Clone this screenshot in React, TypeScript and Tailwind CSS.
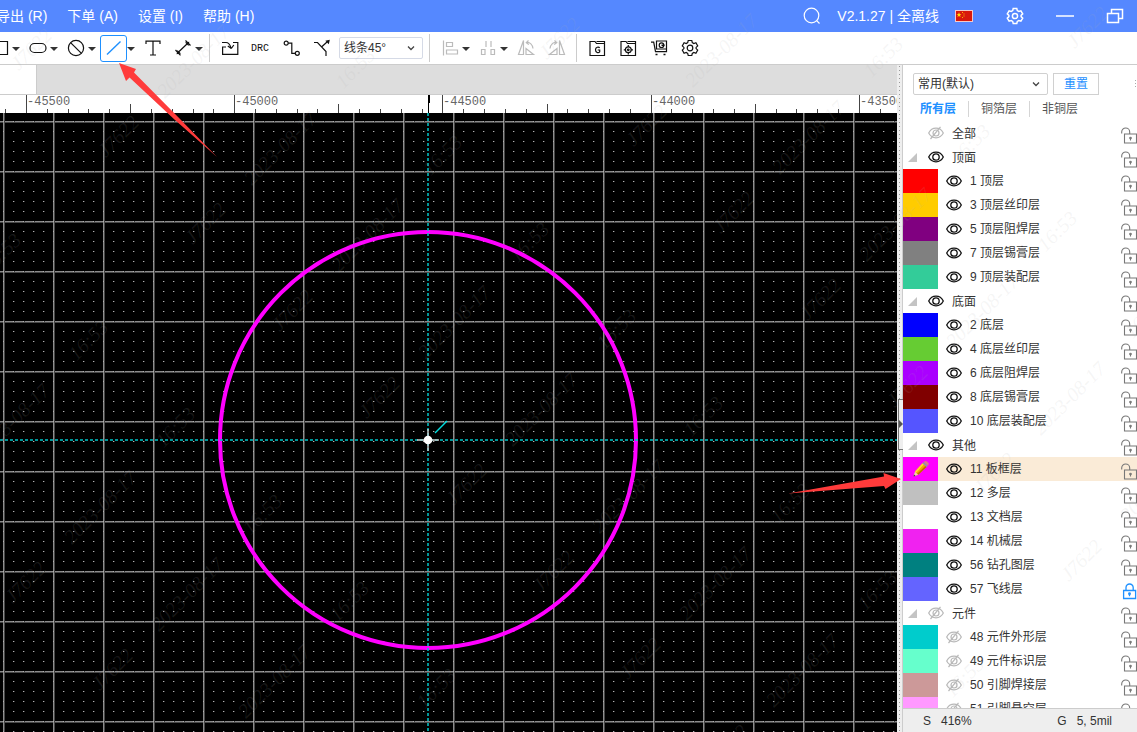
import { ReactNode, useState } from "react";
import clsx from "clsx";

interface Layer {
  id: number;
  name: string;
  color: string;
  locked?: boolean;
}

interface LayerGroup {
  name: string;
  visible: boolean;
  layers: Layer[];
}

const GROUPS: LayerGroup[] = [
  {
    name: "顶面",
    visible: true,
    layers: [
      { id: 1, name: "顶层", color: "bg-[#ff0000]" },
      { id: 3, name: "顶层丝印层", color: "bg-[#ffcc00]" },
      { id: 5, name: "顶层阻焊层", color: "bg-[#800080]" },
      { id: 7, name: "顶层锡膏层", color: "bg-[#808080]" },
      { id: 9, name: "顶层装配层", color: "bg-[#33cc99]" },
    ],
  },
  {
    name: "底面",
    visible: true,
    layers: [
      { id: 2, name: "底层", color: "bg-[#0000ff]" },
      { id: 4, name: "底层丝印层", color: "bg-[#66cc33]" },
      { id: 6, name: "底层阻焊层", color: "bg-[#aa00ff]" },
      { id: 8, name: "底层锡膏层", color: "bg-[#800000]" },
      { id: 10, name: "底层装配层", color: "bg-[#5555ff]" },
    ],
  },
  {
    name: "其他",
    visible: true,
    layers: [
      { id: 11, name: "板框层", color: "bg-[#ff00ff]" },
      { id: 12, name: "多层", color: "bg-[#c0c0c0]" },
      { id: 13, name: "文档层", color: "bg-white" },
      { id: 14, name: "机械层", color: "bg-[#f022f0]" },
      { id: 56, name: "钻孔图层", color: "bg-[#008080]" },
      { id: 57, name: "飞线层", color: "bg-[#6464ff]", locked: true },
    ],
  },
  {
    name: "元件",
    visible: false,
    layers: [
      { id: 48, name: "元件外形层", color: "bg-[#00cccc]" },
      { id: 49, name: "元件标识层", color: "bg-[#66ffcc]" },
      { id: 50, name: "引脚焊接层", color: "bg-[#cc9999]" },
      { id: 51, name: "引脚悬空层", color: "bg-[#ff99ff]" },
    ],
  },
];

const MENUS = ["导出 (R)", "下单 (A)", "设置 (I)", "帮助 (H)"];
const TABS = ["所有层", "铜箔层", "非铜层"];

const GEAR =
  "M8.2 2.5h3.6l.5 2.1 1.5.9 2.1-.7 1.8 3.1-1.6 1.5v1.2l1.6 1.5-1.8 3.1-2.1-.7-1.5.9-.5 2.1H8.2l-.5-2.1-1.5-.9-2.1.7-1.8-3.1 1.6-1.5V9.4L2.3 7.9l1.8-3.1 2.1.7 1.5-.9z";

/* ---------- ICONS ---------- */

const Icon = ({ children, className }: { children: ReactNode; className?: string }) => (
  <svg
    viewBox="0 0 20 20"
    className={clsx("h-5 w-5 shrink-0", className)}
    fill="none"
    stroke="currentColor"
    strokeWidth="1.2"
    aria-hidden="true"
  >
    {children}
  </svg>
);

const Chevron = () => (
  <svg
    viewBox="0 0 8 8"
    className="pointer-events-none absolute top-1/2 right-2 h-2 w-2 -translate-y-1/2"
    fill="none"
    stroke="#444"
    strokeWidth="1.3"
    aria-hidden="true"
  >
    <path d="M1 2.5 4 5.5 7 2.5" />
  </svg>
);

const EyeIcon = ({ on }: { on: boolean }) =>
  on ? (
    <svg viewBox="0 0 16 14" className="h-3.5 w-4" fill="none" stroke="#111" strokeWidth="1.3">
      <path d="M.7 7C2.3 3.8 5 2.2 8 2.2S13.7 3.8 15.3 7C13.7 10.2 11 11.8 8 11.8S2.3 10.2.7 7z" />
      <circle cx="8" cy="7" r="3.2" />
    </svg>
  ) : (
    <svg viewBox="0 0 16 14" className="h-3.5 w-4" fill="none" stroke="#b8b8b8" strokeWidth="1.2">
      <path d="M.7 7C2.3 3.8 5 2.2 8 2.2S13.7 3.8 15.3 7C13.7 10.2 11 11.8 8 11.8S2.3 10.2.7 7z" />
      <circle cx="8" cy="7" r="3" />
      <path d="M2.5 13 12.5.8" />
    </svg>
  );

const LockIcon = ({ locked }: { locked?: boolean }) =>
  locked ? (
    <svg viewBox="0 0 16 17" className="h-[17px] w-4" fill="none" stroke="#1e90ff" strokeWidth="1.3">
      <path d="M2.6 7.5h12v8h-12zM5 7.5V4.6a3.6 3.6 0 0 1 7.2 0v2.9M8.5 10v3.2" />
      <circle cx="8.5" cy="10.8" r=".8" />
    </svg>
  ) : (
    <svg viewBox="0 0 16 17" className="h-[17px] w-4" fill="none" stroke="#777" strokeWidth="1.1">
      <path d="M3.500 7h12v9h-12zM.7 6.500V5a4 4 0 0 1 8 0v2M9.500 10.500v3" />
      <circle cx="9.500" cy="11" r=".8" />
    </svg>
  );

const PencilIcon = () => (
  <svg viewBox="0 0 18 18" className="h-[18px] w-[18px]" aria-hidden="true">
    <path d="M1.5 16.5 3 11.5 6.3 14.8z" fill="#f4d3a1" />
    <path d="M1.5 16.5 2.1 14.5 3.5 15.9z" fill="#333" />
    <path d="M3 11.5 10.5 3.3 14.5 7 6.3 14.8z" fill="#f5a800" />
    <path d="M3 11.5 10.5 3.3 11.8 4.5 4.2 12.7z" fill="#ffd633" />
    <path d="M6.3 14.8 5.2 13.7 13.3 5.9 14.5 7z" fill="#b86a00" />
    <path d="M10.5 3.3 11.9 1.9 15.9 5.6 14.5 7z" fill="#8c9aa5" />
    <path d="M11.9 1.9Q13.2.6 14.8 1.4L16.6 3.1Q17.2 4.4 15.9 5.6z" fill="#d98282" />
  </svg>
);

/* ---------- TOOLBAR ---------- */

const ToolButton = ({
  label,
  size = "h-5 w-5",
  className,
  children,
}: {
  label: string;
  size?: string;
  className?: string;
  children: ReactNode;
}) => (
  <button
    type="button"
    title={label}
    aria-label={label}
    className={clsx("flex shrink-0 items-center justify-center", size, className)}
  >
    {children}
  </button>
);

const Caret = ({ label, className = "w-3" }: { label: string; className?: string }) => (
  <button
    type="button"
    aria-label={label}
    className={clsx("flex h-5 shrink-0 items-center justify-center pt-0.5", className)}
  >
    <svg viewBox="0 0 8 4" className="h-1 w-2 shrink-0" fill="#333" aria-hidden="true">
      <path d="M0 0h8L4 4z" />
    </svg>
  </button>
);

const Divider = ({ className }: { className?: string }) => (
  <span className={clsx("h-7 w-px shrink-0 bg-[#ccc]", className)} />
);

const Toolbar = () => (
  <div className="flex h-[33px] shrink-0 items-center border-b border-[#ccc] bg-white text-[#111]">
    <ToolButton label="矩形" size="h-5 w-2.5">
      <svg viewBox="0 0 10 20" className="h-5 w-2.5 shrink-0" fill="none" stroke="currentColor" strokeWidth="1.2">
        <path d="M0 3.5h7.5v13H0" />
      </svg>
    </ToolButton>
    <Caret label="更多矩形" />
    <ToolButton label="焊盘" className="ml-1.5">
      <Icon>
        <rect x="2" y="5.5" width="16" height="9" rx="4.5" />
      </Icon>
    </ToolButton>
    <Caret label="更多焊盘" />
    <ToolButton label="禁止区域" className="ml-1.5">
      <Icon>
        <circle cx="10" cy="10" r="7.6" />
        <path d="M4.8 4.8 15.2 15.2" />
      </Icon>
    </ToolButton>
    <Caret label="更多禁止区域" />
    <ToolButton
      label="线条"
      size="h-[27px] w-[27px]"
      className="ml-0.5 rounded-[3px] border border-[#1e90ff] text-[#1e90ff]"
    >
      <Icon>
        <path d="M3 16.5 16.5 3.5" strokeWidth="1.4" />
      </Icon>
    </ToolButton>
    <Caret label="更多线条" className="w-2" />
    <ToolButton label="文本" className="ml-2">
      <Icon>
        <path d="M3 6V3.2h14V6M10 3.2V17M7 17h6" />
      </Icon>
    </ToolButton>
    <ToolButton label="尺寸" className="ml-2.5">
      <Icon>
        <path d="M4.5 15 15 5M2.5 12l5 5.3M12.5 2.5l5 5" />
        <path d="M3.5 16.2 4.5 12 8 15.5zM16.3 3.8 15.5 8 12 4.5z" fill="currentColor" stroke="none" />
      </Icon>
    </ToolButton>
    <Caret label="更多尺寸" />
    <Divider className="ml-1" />
    <ToolButton label="导入变更" className="ml-2.5">
      <Icon>
        <path d="M6 9H2.6v7.4h15.2V4.5H13M2 4.5h4c3 0 4 2 5 5.5M11.3 10.5 7.8 8M11.3 10.5 13.8 7" />
      </Icon>
    </ToolButton>
    <ToolButton label="设计规则检查" className="ml-2.5 font-['Liberation_Mono',monospace] text-[10px]">
      DRC
    </ToolButton>
    <ToolButton label="布线" className="ml-3">
      <Icon>
        <circle cx="4.2" cy="5.2" r="2" />
        <circle cx="15.3" cy="15.3" r="2" />
        <path d="M6.2 5.2h3.6v10.1h3.5" />
      </Icon>
    </ToolButton>
    <ToolButton label="拆分走线" className="ml-2.5">
      <Icon>
        <path d="M2 4.5h3.5L14 13.5V18M9.5 9 15 4" />
        <path d="M17.8 1.8 16.8 6.3 13.3 2.8z" fill="currentColor" stroke="none" />
      </Icon>
    </ToolButton>
    <div className="relative ml-[7px] w-[84px] shrink-0">
      <select
        aria-label="线条角度"
        defaultValue="45"
        className="block h-[22px] w-full appearance-none rounded-[2px] border border-[#d5dae6] bg-white pl-1 text-xs text-[#333]"
      >
        <option value="45">线条45°</option>
        <option value="90">线条90°</option>
      </select>
      <Chevron />
    </div>
    <Divider className="ml-1.5" />
    <ToolButton label="左对齐" className="ml-3 text-[#bbb]">
      <Icon>
        <path d="M1.5 2.5v15M4.5 4.5h6v4h-6zM4.5 12h11v4h-11z" />
      </Icon>
    </ToolButton>
    <Caret label="更多对齐" className="w-2" />
    <ToolButton label="水平分布" className="ml-2 text-[#bbb]">
      <Icon>
        <path d="M8 3v6M13 3v6M3.5 11.5H7v5H3.5zM13 11.5h3.5v5H13z" />
      </Icon>
    </ToolButton>
    <Caret label="更多分布" className="ml-0.5 w-2" />
    <ToolButton label="左旋转" className="ml-2 text-[#bbb]">
      <Icon>
        <path d="M7.5 2.5v14h-5zM10 10.5v6h7.5zM10.5 4.5c3.5-.5 6 2 6.5 6M12.5 2.5 10.3 4.6l2.5 2" />
      </Icon>
    </ToolButton>
    <ToolButton label="右旋转" className="ml-[11px] text-[#bbb]">
      <Icon>
        <path d="M12.5 2.5v14h5zM10 10.5v6H2.5zM9.5 4.5C6 4 3.5 6.5 3 10.5M7.5 2.5 9.7 4.6l-2.5 2" />
      </Icon>
    </ToolButton>
    <Divider className="ml-[9px]" />
    <ToolButton label="Gerber 输出" className="ml-2.5">
      <Icon>
        <path d="M3 3.5h5l1.5 2H17.5v12H3zM9.5 3.5h8v2M12.7 9.8c-1-1.2-4.2-1-4.2 2s3 3.4 4.2 2v-1.8h-2" />
      </Icon>
    </ToolButton>
    <ToolButton label="坐标文件" className="ml-[11px]">
      <Icon>
        <path d="M3 3.5h5l1.5 2H17.5v12H3zM9.5 3.5h8v2M10.3 7v2M10.3 14.5v2M5.8 11.8h2M13 11.8h2" />
        <circle cx="10.3" cy="11.8" r="2.9" />
        <circle cx="10.3" cy="11.8" r=".8" />
      </Icon>
    </ToolButton>
    <ToolButton label="下单" className="ml-[11px]">
      <Icon>
        <path d="M2 4.2h2.7l1.8 9.5h11V3H7.5V11H17.5" />
        <circle cx="12.5" cy="7.2" r="2.3" />
        <path d="M12.5 7.2h3M6.5 16.5h2M14.5 16.5h2" strokeWidth="1.6" />
      </Icon>
    </ToolButton>
    <ToolButton label="设置" className="ml-[11px]">
      <Icon>
        <path d={GEAR} />
        <circle cx="10" cy="10" r="2.8" />
      </Icon>
    </ToolButton>
  </div>
);

/* ---------- HEADER ---------- */

const Header = () => (
  <header className="flex h-8 shrink-0 items-center justify-between bg-[#5588ff] pr-3 text-sm text-white">
    <nav className="-ml-1 flex gap-5">
      {MENUS.map((m) => (
        <button key={m} type="button" className="whitespace-nowrap">
          {m}
        </button>
      ))}
    </nav>
    <div className="flex items-center">
      <button type="button" aria-label="搜索">
        <Icon>
          <circle cx="10.5" cy="9.5" r="7.3" />
          <path d="M15.7 14.7 18.5 17.5" />
        </Icon>
      </button>
      <span className="ml-4 whitespace-nowrap">V2.1.27 | 全离线</span>
      <button type="button" aria-label="语言" className="ml-4">
        <svg viewBox="0 0 18 12" className="h-3 w-[18px]" aria-hidden="true">
          <rect width="18" height="12" fill="#f3c9c9" />
          <rect x="1" y="1" width="16" height="10" fill="#d8180c" />
          <path d="M4 2.2 4.7 4H6.5L5 5.1 5.6 7 4 5.9 2.4 7 3 5.1 1.5 4H3.3z" fill="#ffde00" />
          <path d="M7 2h1v1H7zM8.5 3.5h1v1h-1zM8.5 5.5h1v1h-1zM7 7h1v1H7z" fill="#ffb300" />
        </svg>
      </button>
      <button type="button" aria-label="系统设置" className="ml-8">
        <Icon>
          <path d={GEAR} strokeWidth="1.5" />
          <circle cx="10" cy="10" r="2.6" strokeWidth="1.5" />
        </Icon>
      </button>
      <button type="button" aria-label="最小化" className="ml-[30px]">
        <Icon>
          <path d="M1 10h18" strokeWidth="1.5" />
        </Icon>
      </button>
      <button type="button" aria-label="还原" className="ml-[30px]">
        <Icon>
          <path d="M2.5 7.5h11v9h-11zM6.5 7V3.5h11v9H14" strokeWidth="1.5" />
        </Icon>
      </button>
    </div>
  </header>
);

/* ---------- CANVAS ---------- */

const RULER_STEP = 208.2;
const RULER_START = 26.5;

const Ruler = () => {
  const ticks = Array.from({ length: 110 }, (_, i) => i - 1);
  return (
    <svg className="block h-[18px] w-full shrink-0 bg-white" aria-hidden="true">
      {ticks.map((i) => {
        const x = Math.floor(RULER_START + (i * RULER_STEP) / 10);
        const h = i % 10 === 0 ? 18 : i % 5 === 0 ? 9 : 4;
        return <rect key={i} x={x} y={18 - h} width="1" height={h} fill="#444" />;
      })}
      {ticks
        .filter((i) => i % 10 === 0)
        .map((i) => (
          <text
            key={i}
            x={Math.floor(RULER_START + (i * RULER_STEP) / 10) + 1}
            y="10"
            fill="#666"
            className="font-['Liberation_Mono',monospace] text-xs"
          >
            {-45500 + i * 50}
          </text>
        ))}
      <path d="M428.5 0v18" stroke="#000" />
      <path d="M429 0v8" stroke="#000" strokeWidth="2" />
    </svg>
  );
};

const Canvas = () => (
  <svg className="block min-h-0 w-full flex-1 bg-black" role="img" aria-label="PCB 画布">
    <defs>
      <pattern id="dots" x="3" y="8" width="10" height="10" patternUnits="userSpaceOnUse">
        <rect width="1" height="1" fill="#b4b4b4" />
        <rect x="1" width="1" height="1" fill="#3c3c3c" />
      </pattern>
      <pattern id="grid" x="3" y="8" width="50" height="50" patternUnits="userSpaceOnUse">
        <rect y="1" width="50" height="1" fill="#484848" />
        <rect x="1" width="1" height="50" fill="#484848" />
        <rect width="50" height="1" fill="#8c8c8c" />
        <rect width="1" height="50" fill="#8c8c8c" />
      </pattern>
    </defs>
    <rect width="100%" height="100%" fill="url(#grid)" />
    <rect width="100%" height="100%" fill="url(#dots)" />
    <circle cx="428" cy="327" r="208" fill="none" stroke="#ff00ff" strokeWidth="4" />
    <line x1="428" y1="0" x2="428" y2="100%" stroke="#00c8cc" strokeWidth="1.5" strokeDasharray="3 2" />
    <line x1="0" y1="327" x2="100%" y2="327" stroke="#00c8cc" strokeWidth="1.5" strokeDasharray="3 2" />
    <path d="M417 327h22M428 316v22" stroke="#ccc" strokeWidth="1.5" />
    <circle cx="428" cy="327" r="4.3" fill="#fff" />
    <path d="M435 320 447 308" stroke="#00dde0" strokeWidth="1.4" />
  </svg>
);

/* ---------- LAYER PANEL ---------- */

const Splitter = () => (
  <div className="relative w-1.5 shrink-0 border-r border-[#ccc] bg-[#eee]">
    <svg className="h-full w-full" aria-hidden="true">
      <defs>
        <pattern id="grip" width="6" height="4" patternUnits="userSpaceOnUse">
          <rect x="2" y="1" width="1" height="1" fill="#999" />
        </pattern>
      </defs>
      <rect width="100%" height="100%" fill="url(#grip)" />
    </svg>
    <button
      type="button"
      aria-label="折叠面板"
      className="absolute top-1/2 left-px flex h-[51px] w-[5px] items-center border border-r-0 border-[#777] bg-[#eee]"
    >
      <svg viewBox="0 0 4 8" className="h-2 w-1 shrink-0" fill="#555">
        <path d="M0 0 4 4 0 8z" />
      </svg>
    </button>
  </div>
);

const LayerPanel = () => {
  const [tab, setTab] = useState(TABS[0]);
  const [activeId, setActiveId] = useState(11);

  return (
    <aside className="flex w-[234px] shrink-0 flex-col overflow-hidden bg-white text-xs text-[#333]">
      <div className="flex shrink-0 items-center pt-2 pl-2.5">
        <div className="relative w-[135px] shrink-0">
          <select
            aria-label="图层配置"
            className="block h-[22px] w-full appearance-none rounded-[2px] border border-[#d0d0d0] bg-white pl-1 text-[#333]"
          >
            <option>常用(默认)</option>
          </select>
          <Chevron />
        </div>
        <button type="button" className="ml-[5px] h-[22px] w-[46px] shrink-0 border border-[#d0d0d0] text-[#1e90ff]">
          重置
        </button>
        <button type="button" aria-label="更多" className="ml-auto">
          <svg viewBox="0 0 2 8" className="h-2 w-0.5" fill="#aaa">
            <path d="M0 0h1v1H0zM0 3h1v1H0zM0 6h1v1H0z" />
          </svg>
        </button>
      </div>

      <div className="flex h-[26px] shrink-0 items-center pt-0.5 pl-[5px]" role="tablist">
        {TABS.map((t) => (
          <button
            key={t}
            type="button"
            role="tab"
            aria-selected={t === tab}
            onClick={() => setTab(t)}
            className={clsx(
              "border-r border-[#d5d5d5] px-3 leading-4 last:border-r-0",
              t === tab ? "font-bold text-[#1e90ff]" : "text-[#555]"
            )}
          >
            {t}
          </button>
        ))}
      </div>

      <ul className="min-h-0 flex-1 overflow-hidden">
        <li className="flex h-6 items-center pl-[25px]">
          <button type="button" aria-label="显示全部">
            <EyeIcon on={false} />
          </button>
          <span className="ml-2 pt-px">全部</span>
          <button type="button" aria-label="锁定全部" className="ml-auto pt-1">
            <LockIcon />
          </button>
        </li>
        {GROUPS.map((g) => (
          <li key={g.name}>
            <div className="flex h-6 items-center pl-[5px]">
              <button type="button" aria-label={`折叠${g.name}`}>
                <svg viewBox="0 0 9 9" className="h-[9px] w-[9px]" fill="#c4c4c4">
                  <path d="M9 0v9H0z" />
                </svg>
              </button>
              <button type="button" aria-label={`显示${g.name}`} className="ml-[11px]">
                <EyeIcon on={g.visible} />
              </button>
              <span className="ml-2 pt-px">{g.name}</span>
              <button type="button" aria-label={`锁定${g.name}`} className="ml-auto pt-1">
                <LockIcon />
              </button>
            </div>
            <ul>
              {g.layers.map((l) => (
                <li key={l.id} className={clsx("flex h-6 items-center", l.id === activeId && "bg-[#faebd7]")}>
                  <button
                    type="button"
                    aria-label={`激活${l.name}`}
                    onClick={() => setActiveId(l.id)}
                    className={clsx("flex h-6 w-[35px] shrink-0 items-center justify-center", l.color)}
                  >
                    {l.id === activeId && <PencilIcon />}
                  </button>
                  <button type="button" aria-label={`显示${l.name}`} className="ml-2">
                    <EyeIcon on={g.visible} />
                  </button>
                  <span className="ml-2 whitespace-nowrap">
                    {l.id} {l.name}
                  </span>
                  <button type="button" aria-label={`锁定${l.name}`} className="ml-auto pt-1">
                    <LockIcon locked={l.locked} />
                  </button>
                </li>
              ))}
            </ul>
          </li>
        ))}
      </ul>

      <footer className="flex h-6 shrink-0 items-center justify-between border-t border-[#ccc] bg-[#eee] pr-[25px] pl-5">
        <span className="flex gap-2.5">
          <span>S</span>
          <span>416%</span>
        </span>
        <span className="flex gap-2.5">
          <span>G</span>
          <span>5, 5mil</span>
        </span>
      </footer>
    </aside>
  );
};

/* ---------- OVERLAYS ---------- */

// one cell of the watermark, repeated along two skewed directions
const MARKS = [
  { text: "J7622", x: 118, y: 136 },
  { text: "2023-08-17", x: 280, y: 148 },
  { text: "16:53", x: 442, y: 155 },
];

const Watermark = () => {
  const cells: { key: string; text: string; x: number; y: number }[] = [];
  for (let i = -14; i <= 14; i++) {
    for (let j = -3; j <= 3; j++) {
      MARKS.forEach((m) => {
        const x = m.x + i * 87 + j * 528;
        const y = m.y + i * 87 - j * 11;
        if (x > -20 && x < window.innerWidth + 20 && y > -20 && y < window.innerHeight + 20) {
          cells.push({ key: `${m.text}/${i}/${j}`, text: m.text, x, y });
        }
      });
    }
  }
  return (
    <svg className="pointer-events-none absolute inset-0 h-full w-full" aria-hidden="true">
      {cells.map((c) => (
        <text
          key={c.key}
          transform={`translate(${c.x} ${c.y}) rotate(-45)`}
          textAnchor="middle"
          dominantBaseline="central"
          fill="#b0b0b0"
          fillOpacity="0.12"
          className="font-['Liberation_Serif',serif] text-xl italic"
        >
          {c.text}
        </text>
      ))}
    </svg>
  );
};

const Arrows = () => (
  <svg className="pointer-events-none absolute inset-0 h-full w-full" fill="#ff3b3b" aria-hidden="true">
    <path d="M119 63 136 69 134 72.5 181 120 217 157 175 120 129.5 77.5 126 81z" />
    <path d="M901 479 883.5 473 884 476.5 788 493.5 884 486 885.5 489z" />
  </svg>
);

const App = () => (
  <div className="relative flex h-screen flex-col overflow-hidden bg-white font-['Liberation_Sans','Noto_Sans_CJK_SC',sans-serif]">
    <Header />
    <Toolbar />
    <div className="flex min-h-0 flex-1">
      <main className="flex min-w-0 flex-1 flex-col">
        <div className="flex h-[30px] shrink-0 border-b border-[#ccc] bg-[#ddd]">
          <div className="w-[37px] border-r border-[#ccc] bg-white" />
        </div>
        <Ruler />
        <Canvas />
      </main>
      <Splitter />
      <LayerPanel />
    </div>
    <Watermark />
    <Arrows />
  </div>
);

export default App;
